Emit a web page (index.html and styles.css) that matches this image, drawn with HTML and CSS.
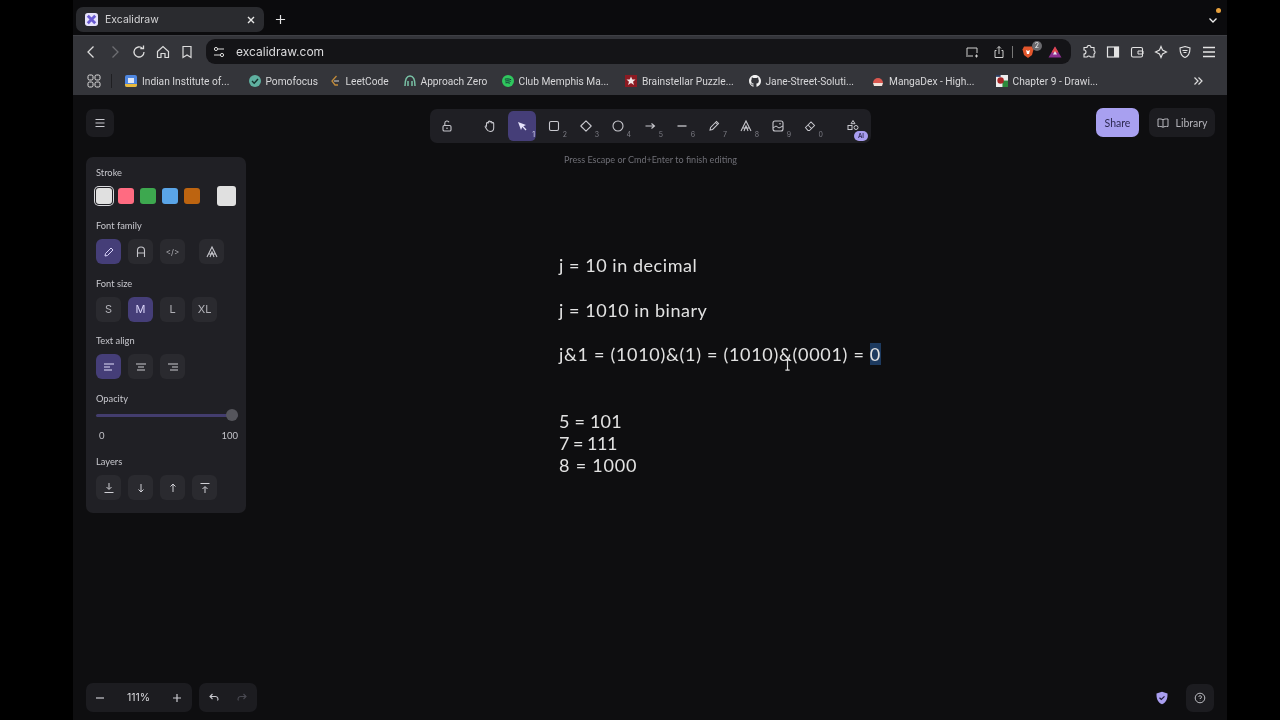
FILE: index.html
```html
<!DOCTYPE html>
<html lang="en">
<head>
<meta charset="utf-8">
<title>Excalidraw</title>
<link rel="stylesheet" href="styles.css">
</head>
<body>
<div class="window">
  <div class="tabstrip">
    <div class="tab">
      <svg class="favicon" viewBox="0 0 14 14"><rect width="14" height="14" rx="3" fill="#e6e2fb"/><path d="M3 3l8 8M11 3l-8 8" stroke="#6a5bd2" stroke-width="3"/></svg>
      <span class="tab-title">Excalidraw</span>
      <svg class="ico10" viewBox="0 0 10 10"><path d="M2 2l6 6M8 2l-6 6" stroke="#e8e8e8" stroke-width="1.4"/></svg>
    </div>
    <svg class="newtab" viewBox="0 0 12 12"><path d="M6 1v10M1 6h10" stroke="#e4e4e4" stroke-width="1.3"/></svg>
    <div class="strip-end">
      <svg class="ico10" viewBox="0 0 10 10"><path d="M1.500 3.500L5 7l3.500-3.500" fill="none" stroke="#eee" stroke-width="1.3"/></svg>
      <span class="rec-dot"></span>
    </div>
  </div>

  <div class="navbar">
    <div class="nav-btns">
      <svg class="ico16" viewBox="0 0 16 16"><path d="M10.500 2.500L5 8l5.500 5.500" fill="none" stroke="#dcdcdc" stroke-width="1.3"/></svg>
      <svg class="ico16" viewBox="0 0 16 16"><path d="M5.500 2.500L11 8l-5.500 5.500" fill="none" stroke="#6d6e72" stroke-width="1.3"/></svg>
      <svg class="ico16" viewBox="0 0 16 16"><path d="M13 8a5 5 0 1 1-1.500-3.600M12.500 1.500v3.200H9.300" fill="none" stroke="#dcdcdc" stroke-width="1.3"/></svg>
      <svg class="ico16" viewBox="0 0 16 16"><path d="M2.500 7.500L8 2.500l5.500 5v6h-3.500v-4h-4v4H2.500z" fill="none" stroke="#dcdcdc" stroke-width="1.200"/></svg>
      <svg class="ico16" viewBox="0 0 16 16"><path d="M4 2.500h8v11L8 11l-4 2.500z" fill="none" stroke="#dcdcdc" stroke-width="1.200"/></svg>
    </div>
    <div class="urlbar">
      <svg class="ico12 url-tune" viewBox="0 0 12 12"><circle cx="3" cy="3" r="1.600" fill="none" stroke="#ddd"/><path d="M5 3h6M1 9h6" stroke="#ddd"/><circle cx="9" cy="9" r="1.600" fill="none" stroke="#ddd"/></svg>
      <span class="url-text">excalidraw.com</span>
      <div class="url-actions">
        <svg class="ico14" viewBox="0 0 14 14"><path d="M2 10V3h10v5M1 11h7M10 11h3M11.500 9.500v3" fill="none" stroke="#d0d0d0"/></svg>
        <svg class="ico14 gap-share" viewBox="0 0 14 14"><path d="M4.500 5.500H3v7h8v-7H9.500M7 9V1.500M5 3.500l2-2 2 2" fill="none" stroke="#d0d0d0"/></svg>
        <span class="url-sep"></span>
        <span class="brave-wrap">
          <svg class="ico14" viewBox="0 0 14 14"><path d="M3 1.500h8l1.500 3L11 10l-4 3-4-3-1.500-5.500z" fill="#e2562c"/><path d="M5 5l2 1 2-1-1 4H6z" fill="#fff"/></svg>
          <span class="brave-badge">2</span>
        </span>
        <svg class="ico14 gap-rewards" viewBox="0 0 14 14"><path d="M7 1.500L13.500 12.500H.5z" fill="#8c2f8f"/><path d="M7 1.500L10.500 7.500H3.500z" fill="#e2474b"/><path d="M7 6l2 3.500H5z" fill="#f0e8f0"/></svg>
      </div>
    </div>
    <div class="ext-btns">
      <svg class="ico14" viewBox="0 0 14 14"><path d="M5 2.500a2 2 0 0 1 4 0H12v3a2 2 0 0 1 0 3.500V12H8.500a2 2 0 0 0-3.500 0H2V9a2 2 0 0 0 0-4V2.500z" fill="none" stroke="#e4e4e4" stroke-width="1.100"/></svg>
      <svg class="ico14" viewBox="0 0 14 14"><rect x="1.500" y="2" width="11" height="10" fill="none" stroke="#e4e4e4" stroke-width="1.200"/><rect x="8" y="2" width="4.500" height="10" fill="#e4e4e4"/></svg>
      <svg class="ico14" viewBox="0 0 14 14"><rect x="1.500" y="2.500" width="11" height="9.500" rx="1.500" fill="none" stroke="#e4e4e4" stroke-width="1.100"/><path d="M8 6h5v3H8z" fill="none" stroke="#e4e4e4"/></svg>
      <svg class="ico14" viewBox="0 0 14 14"><path d="M7 1.500l1.500 3.500 4 2-4 2L7 12.500 5.500 9l-4-2 4-2z" fill="none" stroke="#e4e4e4" stroke-width="1.100"/></svg>
      <svg class="ico14" viewBox="0 0 14 14"><path d="M7 1.500l5 1.500c0 5-1 8-5 9.500-4-1.500-5-4.500-5-9.500z" fill="none" stroke="#e4e4e4" stroke-width="1.100"/><path d="M4.500 5.500h5M5.500 7.500h3" stroke="#e4e4e4"/></svg>
      <svg class="ico14" viewBox="0 0 14 14"><path d="M1 2.500h12M1 7h12M1 11.500h12" stroke="#e4e4e4" stroke-width="1.300"/></svg>
    </div>
  </div>

  <div class="bookmarks">
    <svg class="ico14 apps" viewBox="0 0 14 14"><g fill="none" stroke="#e0e0e0"><rect x="1" y="1" width="5" height="5" rx="1.500"/><rect x="8" y="1" width="5" height="5" rx="1.500"/><rect x="1" y="8" width="5" height="5" rx="1.500"/><rect x="8" y="8" width="5" height="5" rx="1.500"/></g></svg>
    <span class="bm-sep"></span>
    <div class="bm bm-full"><svg class="ico12" viewBox="0 0 12 12"><rect width="12" height="12" rx="2" fill="#4f87e0"/><path d="M0 9h12v1a2 2 0 0 1-2 2H2a2 2 0 0 1-2-2z" fill="#e8b93c"/><rect x="3" y="3" width="6" height="5" fill="#dfe7f5"/></svg><span>Indian Institute of...</span></div>
    <div class="bm bm-pomo"><svg class="ico12" viewBox="0 0 12 12"><circle cx="6" cy="6" r="6" fill="#5fb0a0"/><path d="M3 6l2.200 2.200L9 4" fill="none" stroke="#16302c" stroke-width="1.400"/></svg><span>Pomofocus</span></div>
    <div class="bm bm-leet"><svg class="ico12" viewBox="0 0 12 12"><path d="M7.500 1L3 6l3 4h3" fill="none" stroke="#c08a3a" stroke-width="1.300"/><path d="M5 6h5" stroke="#bbb" stroke-width="1.200"/></svg><span>LeetCode</span></div>
    <div class="bm bm-az"><svg class="ico12" viewBox="0 0 12 12"><path d="M1 11C1 5 3 1 6 1s5 4 5 10M4 11V6M8 11V6" fill="none" stroke="#79c2a6" stroke-width="1.500"/></svg><span>Approach Zero</span></div>
    <div class="bm bm-full"><svg class="ico12" viewBox="0 0 12 12"><circle cx="6" cy="6" r="6" fill="#2fc75d"/><path d="M2.800 4.200c2-.5 4.500-.4 6.400.5M3.200 6c1.800-.4 3.800-.3 5.400.5M3.500 7.800c1.500-.3 3-.2 4.400.4" fill="none" stroke="#123" stroke-width=".9"/></svg><span>Club Memphis Ma...</span></div>
    <div class="bm bm-full"><svg class="ico12" viewBox="0 0 12 12"><rect width="12" height="12" fill="#8b1a22"/><path d="M6 1.500l1.300 3h3.200L8 6.700l1 3.300-3-1.900L3 10l1-3.300-2.500-2.200h3.200z" fill="#f2e6e6"/></svg><span>Brainstellar Puzzle...</span></div>
    <div class="bm bm-full"><svg class="ico12" viewBox="0 0 16 16"><path fill="#f2f2f2" d="M8 0C3.580 0 0 3.580 0 8c0 3.540 2.290 6.530 5.470 7.590.4.070.55-.17.55-.38 0-.19-.01-.82-.01-1.490-2.010.37-2.530-.49-2.690-.94-.09-.23-.48-.94-.82-1.130-.28-.15-.68-.52-.01-.53.63-.01 1.080.58 1.230.82.720 1.210 1.870.87 2.330.66.070-.52.280-.87.510-1.070-1.780-.2-3.640-.89-3.640-3.950 0-.87.310-1.590.820-2.150-.08-.2-.36-1.020.080-2.120 0 0 .67-.21 2.200.82.640-.18 1.320-.27 2-.27s1.360.09 2 .27c1.530-1.040 2.200-.82 2.200-.82.440 1.100.160 1.920.080 2.120.51.560.82 1.270.82 2.150 0 3.070-1.870 3.750-3.650 3.950.290.250.540.730.540 1.480 0 1.070-.010 1.930-.010 2.200 0 .210.150.460.550.380A8.010 8.010 0 0 0 16 8c0-4.420-3.580-8-8-8z"/></svg><span>Jane-Street-Soluti...</span></div>
    <div class="bm bm-full"><svg class="ico12" viewBox="0 0 12 12"><path d="M1 8a5 5 0 0 1 10 0z" fill="#d9574f"/><path d="M1 8h10l-1 3H2z" fill="#f0e2da"/></svg><span>MangaDex - High...</span></div>
    <div class="bm"><svg class="ico12" viewBox="0 0 13 13"><rect width="13" height="13" fill="#eee"/><rect x="7" y="6" width="6" height="7" fill="#2c8a3c"/><circle cx="5" cy="6" r="3.500" fill="#a82626"/><rect y="0" width="5" height="2" fill="#2a3f66"/></svg><span>Chapter 9 - Drawi...</span></div>
    <svg class="ico10 bm-more" viewBox="0 0 10 10"><path d="M1.500 1.500L5 5l-3.500 3.500M5.500 1.500L9 5l-3.500 3.500" fill="none" stroke="#ddd" stroke-width="1.200"/></svg>
  </div>

  <div class="app">
    <header class="topbar">
      <button class="menu-btn"><svg class="ico12" viewBox="0 0 12 12"><path d="M1.500 2.500h9M1.500 6h9M1.500 9.500h9" stroke="#c9c9cf" stroke-width="1.100"/></svg></button>
      <div class="tools-col">
        <div class="tools">
          <span class="tool"><svg class="ico14" viewBox="0 0 14 14"><rect x="3" y="6.500" width="8" height="5.500" rx="1.300" fill="none" stroke="#c5c5cb" stroke-width="1.100"/><path d="M4.800 6.500V4.200a2.200 2.200 0 0 1 4.200-.9" fill="none" stroke="#c5c5cb" stroke-width="1.100"/><circle cx="7" cy="9.200" r=".8" fill="#c5c5cb"/></svg></span>
          <span class="tool-sep"></span>
          <span class="tool"><svg class="ico14" viewBox="0 0 14 14"><path d="M3.500 7V4.500a.9.900 0 0 1 1.800 0V3a.9.900 0 0 1 1.800 0v.5a.9.900 0 0 1 1.800 0V4.500a.9.900 0 0 1 1.800 0V9c0 2.500-1.500 3.500-3.500 3.500S4.500 11.800 3.500 10L2.300 8c-.5-.9.700-1.700 1.200-1z" fill="none" stroke="#c9c9cf" stroke-width="1.050"/></svg></span>
          <span class="tool tool-on"><svg class="ico12" viewBox="0 0 12 12"><path d="M2 2l3 8 1.300-3L9.500 10.500l1-1L7.300 6.200 10 5z" fill="#e6e3fb"/></svg><i>1</i></span>
          <span class="tool"><svg class="ico14" viewBox="0 0 14 14"><rect x="2.500" y="2.500" width="9" height="9" rx="1.500" fill="none" stroke="#c9c9cf" stroke-width="1.100"/></svg><i>2</i></span>
          <span class="tool"><svg class="ico14" viewBox="0 0 14 14"><path d="M7 1.800L12.200 7 7 12.200 1.800 7z" fill="none" stroke="#c9c9cf" stroke-width="1.100" stroke-linejoin="round"/></svg><i>3</i></span>
          <span class="tool"><svg class="ico14" viewBox="0 0 14 14"><circle cx="7" cy="7" r="5" fill="none" stroke="#c9c9cf" stroke-width="1.100"/></svg><i>4</i></span>
          <span class="tool"><svg class="ico14" viewBox="0 0 14 14"><path d="M2.500 7h9M8.500 4.500L11.500 7l-3 2.500" fill="none" stroke="#c9c9cf" stroke-width="1.100"/></svg><i>5</i></span>
          <span class="tool"><svg class="ico14" viewBox="0 0 14 14"><path d="M2.500 7h9" stroke="#c9c9cf" stroke-width="1.300"/></svg><i>6</i></span>
          <span class="tool"><svg class="ico14" viewBox="0 0 14 14"><path d="M3 11l.6-2.600L9.500 2.500l2 2-5.900 5.900zM8.500 3.500l2 2" fill="none" stroke="#c9c9cf" stroke-width="1.050"/></svg><i>7</i></span>
          <span class="tool"><svg class="ico14" viewBox="0 0 14 14"><path d="M2 12L7 2l5 10M4 9h6M5 12L7 7l2 5" fill="none" stroke="#c9c9cf" stroke-width="1.050"/></svg><i>8</i></span>
          <span class="tool"><svg class="ico14" viewBox="0 0 14 14"><rect x="2" y="2" width="10" height="10" rx="2" fill="none" stroke="#c9c9cf" stroke-width="1.100"/><path d="M2 9l3-2 3 2 4-2" fill="none" stroke="#c9c9cf"/><circle cx="9" cy="4.800" r=".8" fill="#c9c9cf"/></svg><i>9</i></span>
          <span class="tool"><svg class="ico14" viewBox="0 0 14 14"><path d="M2.500 8.500L8 3l3.500 3.500L6.500 11.500H5zM5 6l3.500 3.500" fill="none" stroke="#c9c9cf" stroke-width="1.050"/></svg><i>0</i></span>
          <span class="tool-sep"></span>
          <span class="tool"><svg class="ico14" viewBox="0 0 14 14"><path d="M7 1.500l2 3.200H5z" fill="none" stroke="#c9c9cf"/><rect x="2" y="6.500" width="4" height="4" fill="none" stroke="#c9c9cf"/><circle cx="10" cy="8.500" r="2" fill="none" stroke="#c9c9cf"/></svg><b class="ai-badge">AI</b></span>
        </div>
        <div class="hint">Press Escape or Cmd+Enter to finish editing</div>
      </div>
      <div class="top-right">
        <button class="share">Share</button>
        <button class="library"><svg class="ico12" viewBox="0 0 12 12"><path d="M6 2.800C5 2 3 1.800 1 2v7.500c2-.2 4 0 5 .8 1-.8 3-1 5-.8V2c-2-.2-4 0-5 .8zM6 2.800v7.500" fill="none" stroke="#b8b8be"/></svg>Library</button>
      </div>
    </header>

    <div class="stage">
      <aside class="panel">
        <h4>Stroke</h4>
        <div class="swatches">
          <span class="swatch swatch-on sw-white"></span>
          <span class="swatch sw-red"></span>
          <span class="swatch sw-green"></span>
          <span class="swatch sw-blue"></span>
          <span class="swatch sw-orange"></span>
          <span class="swatch-big"></span>
        </div>
        <h4>Font family</h4>
        <div class="btns">
          <span class="pbtn pbtn-on"><svg class="ico12" viewBox="0 0 12 12"><path d="M2 10l.5-2.500L8 2l2 2-5.500 5.500z" fill="none" stroke="#d8d3f8"/></svg></span>
          <span class="pbtn"><svg class="ico12" viewBox="0 0 12 12"><path d="M2.500 11V4.500a3.500 3.500 0 0 1 7 0V11M2.500 7h7" fill="none" stroke="#c4c4ca" stroke-width="1.100"/></svg></span>
          <span class="pbtn code">&lt;/&gt;</span>
          <span class="pbtn pbtn-far"><svg class="ico14" viewBox="0 0 14 14"><path d="M2 12L7 2l5 10M4 9h6M5 12L7 7l2 5" fill="none" stroke="#c9c9cf" stroke-width="1.050"/></svg></span>
        </div>
        <h4>Font size</h4>
        <div class="btns">
          <span class="pbtn">S</span>
          <span class="pbtn pbtn-on">M</span>
          <span class="pbtn">L</span>
          <span class="pbtn">XL</span>
        </div>
        <h4>Text align</h4>
        <div class="btns">
          <span class="pbtn pbtn-on"><svg class="ico10" viewBox="0 0 10 10"><path d="M0 2h10M0 5h6M0 8h8" stroke="#e2def9" stroke-width="1.100"/></svg></span>
          <span class="pbtn"><svg class="ico10" viewBox="0 0 10 10"><path d="M0 2h10M2 5h6M1 8h8" stroke="#c9c9cf" stroke-width="1.100"/></svg></span>
          <span class="pbtn"><svg class="ico10" viewBox="0 0 10 10"><path d="M0 2h10M4 5h6M2 8h8" stroke="#c9c9cf" stroke-width="1.100"/></svg></span>
        </div>
        <h4>Opacity</h4>
        <div class="slider"><span class="thumb"></span></div>
        <div class="range"><span>0</span><span>100</span></div>
        <h4>Layers</h4>
        <div class="btns">
          <span class="pbtn"><svg class="ico12" viewBox="0 0 12 12"><path d="M6 1v6M3.500 5L6 7.500 8.500 5M1.500 10.500h9" fill="none" stroke="#d0d0d6"/></svg></span>
          <span class="pbtn"><svg class="ico12" viewBox="0 0 12 12"><path d="M6 2v8M3.500 7.500L6 10l2.500-2.500" fill="none" stroke="#d0d0d6"/></svg></span>
          <span class="pbtn"><svg class="ico12" viewBox="0 0 12 12"><path d="M6 10V2M3.500 4.500L6 2l2.500 2.500" fill="none" stroke="#d0d0d6"/></svg></span>
          <span class="pbtn"><svg class="ico12" viewBox="0 0 12 12"><path d="M1.500 1.500h9M6 11V5M3.500 7L6 4.500 8.500 7" fill="none" stroke="#d0d0d6"/></svg></span>
        </div>
      </aside>
      <main class="canvas">
        <p class="ln ln1">j = 10 in decimal</p>
        <p class="ln ln2">j = 1010 in binary</p>
        <p class="ln ln3">j&amp;1 = (1010)&amp;(1) = (1010)&amp;(0001) = <span class="sel">0</span><svg class="ibeam" viewBox="0 0 8 14"><path d="M1.500 1h5M4 1v12M1.500 13h5" stroke="#ddd" stroke-width="1.400" fill="none"/></svg></p>
        <div class="group">
          <p class="ln ln5">5 = 101</p>
          <p class="ln ln7">7 = 111</p>
          <p class="ln ln8">8 = 1000</p>
        </div>
      </main>
    </div>

    <footer class="bottombar">
      <div class="pill zoom"><svg class="ico10" viewBox="0 0 10 10"><path d="M1 5h8" stroke="#c9c9cf" stroke-width="1.200"/></svg><span>111%</span><svg class="ico10" viewBox="0 0 10 10"><path d="M1 5h8M5 1v8" stroke="#c9c9cf" stroke-width="1.200"/></svg></div>
      <div class="pill undo"><svg class="ico12" viewBox="0 0 12 12"><path d="M4.500 2L2 4.500 4.500 7M2 4.500h5.500a2.500 2.500 0 0 1 2 4" fill="none" stroke="#c9c9cf" stroke-width="1.100"/></svg><svg class="ico12" viewBox="0 0 12 12"><path d="M7.500 2L10 4.500 7.500 7M10 4.500H4.500a2.500 2.500 0 0 0-2 4" fill="none" stroke="#4a4a52" stroke-width="1.100"/></svg></div>
      <div class="bottom-right">
        <svg class="ico14" viewBox="0 0 14 14"><path d="M7 .8l5.500 1.700c.2 5-1 8.800-5.500 10.700C2.500 11.300 1.300 7.500 1.500 2.500z" fill="#a99ef0"/><path d="M4.500 6.800L6.300 8.500 9.500 5.300" fill="none" stroke="#1e1a38" stroke-width="1.200"/></svg>
        <button class="help"><svg class="ico12" viewBox="0 0 12 12"><circle cx="6" cy="6" r="4.800" fill="none" stroke="#bdbdc3"/><path d="M4.700 4.800A1.400 1.400 0 1 1 6 6.500V7M6 8.500v.3" fill="none" stroke="#bdbdc3"/></svg></button>
      </div>
    </footer>
  </div>
</div>
</body>
</html>
```
FILE: styles.css
```css
* { box-sizing: border-box; }
html, body { margin: 0; height: 100%; background: #000; overflow: hidden; }
body { font-family: "Inter", "Liberation Sans", sans-serif; }
svg { display: block; flex: none; }
.ico10 { width: 10px; height: 10px; }
.ico12 { width: 12px; height: 12px; }
.ico14 { width: 14px; height: 14px; }
.ico16 { width: 16px; height: 16px; }

.window { width: 1154px; height: 720px; margin-left: 73px; background: #0e0e10; display: flex; flex-direction: column; filter: blur(.35px); }

.tabstrip { height: 35px; flex: none; background: #0b0b0d; display: flex; align-items: center; padding: 4px 0 0 3px; }
.tab { width: 188px; height: 25px; background: #2a2b2f; border-radius: 7px; display: flex; align-items: center; padding: 0 8px 0 9px; gap: 7px; }
.favicon { width: 13px; height: 13px; flex: none; }
.tab-title { flex: 1; color: #d4d4d6; font-size: 10.5px; }
.newtab { width: 11px; height: 11px; margin-left: 11px; }
.strip-end { margin-left: auto; margin-right: 9px; position: relative; }
.rec-dot { position: absolute; width: 5px; height: 5px; border-radius: 50%; background: #e8a13c; top: -7px; right: -3px; }

.navbar { height: 32px; flex: none; background: #34353a; display: flex; align-items: center; padding-left: 10px; border-top: 1px solid #3f4045; }
.nav-btns { display: flex; gap: 8px; width: 123px; }
.urlbar { width: 865px; height: 25px; background: #141417; border-radius: 9px; display: flex; align-items: center; padding: 0 9px 0 7px; }
.url-text { color: #dcdcde; font-size: 12px; margin-left: 11px; }
.url-actions { margin-left: auto; display: flex; align-items: center; }
.gap-share { margin-left: 13px; }
.url-sep { width: 1px; height: 12px; background: #777; margin: 0 8px 0 6px; }
.brave-wrap { position: relative; }
.brave-badge { position: absolute; top: -4px; right: -7px; width: 10px; height: 10px; border-radius: 50%; background: #6a6a6e; color: #eee; font-size: 7px; line-height: 10px; text-align: center; }
.gap-rewards { margin-left: 13px; }
.ext-btns { display: flex; gap: 10px; margin-left: 11px; }

.bookmarks { height: 28px; flex: none; background: #34353a; display: flex; align-items: center; padding-left: 14px; }
.bm-sep { width: 1px; height: 14px; background: #1f1f22; margin: 0 13px 0 10px; }
.bm { display: flex; align-items: center; gap: 5px; color: #d7d7d9; font-family: "Roboto", sans-serif; font-size: 10.2px; white-space: nowrap; flex: none; }
.bm-full { width: 123.5px; }
.bm-pomo { width: 80px; }
.bm-leet { width: 75px; }
.bm-az { width: 98px; }
.bm-more { margin-left: auto; margin-right: 24px; }

.app { flex: 1; display: flex; flex-direction: column; padding: 13px 12px 8px 13px; background: #0e0e10; min-height: 0; }
.topbar { display: flex; align-items: flex-start; height: 49px; flex: none; }
.menu-btn { width: 28px; height: 28px; margin-top: 1px; border: 0; padding: 0; background: #1c1c20; border-radius: 7px; display: flex; align-items: center; justify-content: center; }
.tools-col { margin-left: 316px; width: 441px; display: flex; flex-direction: column; align-items: center; }
.tools { width: 441px; height: 34px; background: #1f1f24; border-radius: 7px; display: flex; align-items: center; padding-left: 1px; margin-top: 1px; }
.tool { position: relative; width: 32px; height: 32px; flex: none; display: flex; align-items: center; justify-content: center; border-radius: 7px; }
.tool i { position: absolute; right: 3px; bottom: 3px; font-style: normal; font-size: 7px; color: #7e7e86; }
.tool-on { background: #453e78; background-clip: padding-box; border: solid transparent; border-width: 1px 2px; }
.tool-on i { color: #d9d6f2; right: 1px; bottom: 2px; }
.tool-sep { width: 11px; flex: none; }
.ai-badge { position: absolute; right: 1px; bottom: 1px; width: 14px; height: 10px; border-radius: 5px; background: #a99ef0; color: #29244c; font-size: 6px; line-height: 10px; text-align: center; font-weight: 600; }
.hint { color: #6f6f76; font-family: "Lato", sans-serif; font-size: 9.050px; margin-top: 11px; white-space: nowrap; }
.top-right { margin-left: auto; display: flex; gap: 10px; }
.share { width: 43px; height: 29px; border: 0; padding: 0; border-radius: 7px; background: #a8a0f0; color: #2c2850; font: 10.5px "Lato", sans-serif; }
.library { width: 66px; height: 29px; border: 0; padding: 0; border-radius: 7px; background: #1c1c20; color: #b4b4ba; font: 10.5px "Lato", sans-serif; display: flex; align-items: center; justify-content: center; gap: 7px; }

.stage { flex: 1; display: flex; min-height: 0; }
.panel { width: 160px; height: 356px; background: #202025; border-radius: 7px; padding: 10px; flex: none; }
.panel h4 { margin: 0 0 8px; font-family: "Lato", sans-serif; font-size: 9.300px; line-height: 11px; font-weight: 400; color: #c8c8ce; }
.swatches { display: flex; gap: 6px; align-items: center; height: 20px; margin-bottom: 14px; }
.swatch { width: 16px; height: 16px; border-radius: 3px; flex: none; }
.swatch-on { box-shadow: 0 0 0 1px #202025, 0 0 0 2px #d9d9dd; }
.sw-white { background: #e0e0e0; }
.sw-red { background: #ff6b81; }
.sw-green { background: #3da84f; }
.sw-blue { background: #5aa5e8; }
.sw-orange { background: #bd6410; margin-left: -.5px; }
.swatch-big { width: 20px; height: 20px; background: #e0e0e0; border-radius: 3px; margin-left: 11px; }
.btns { display: flex; gap: 7px; margin-bottom: 13.500px; }
.pbtn { width: 25px; height: 25px; background: #2a2a2f; border-radius: 6px; display: flex; align-items: center; justify-content: center; color: #b0b0b6; font-size: 11px; flex: none; }
.pbtn-on { background: #453e78; color: #d8d3f8; }
.pbtn-far { margin-left: 7px; }
.code { font-size: 8px; }
.slider { position: relative; height: 3px; background: #433d6e; border-radius: 2px; margin: 10px 0 13.500px; width: 142px; }
.thumb { position: absolute; right: 0; top: -4.500px; width: 12px; height: 12px; border-radius: 50%; background: #55555c; }
.range { display: flex; justify-content: space-between; color: #c4c4ca; font-family: "Lato", sans-serif; font-size: 9.500px; line-height: 12px; padding: 0 0 0 3px; width: 142px; margin-bottom: 14px; }

.canvas { flex: 1; padding: 0 0 0 313px; min-width: 0; }
.ln { margin: 0; color: #e2e2e2; font-family: "Lato", sans-serif; font-weight: 400; font-size: 18px; line-height: 22px; white-space: nowrap; position: relative; }
.ln1 { margin-top: 97px; letter-spacing: .55px; }
.ln2 { margin-top: 23px; letter-spacing: .55px; }
.ln3 { margin-top: 22px; letter-spacing: .7px; }
.group { margin-top: 45px; }
.ln5 { letter-spacing: .2px; }
.ln7 { letter-spacing: -.5px; }
.ln8 { letter-spacing: .8px; }
.sel { background: #1d3a5f; display: inline-block; }
.ibeam { position: absolute; width: 7px; height: 12px; left: 225px; top: 16px; }

.bottombar { display: flex; align-items: center; height: 29px; flex: none; gap: 7px; }
.pill { height: 29px; background: #1c1c20; border-radius: 7px; display: flex; align-items: center; }
.zoom { width: 106px; justify-content: space-between; padding: 0 10px 0 9px; color: #d6d6da; font-size: 10.500px; }
.undo { width: 58px; justify-content: space-between; padding: 0 9px; }
.bottom-right { margin-left: auto; display: flex; align-items: center; gap: 17px; margin-right: 1px; }
.help { width: 28px; height: 28px; border: 0; padding: 0; border-radius: 7px; background: #1c1c20; display: flex; align-items: center; justify-content: center; }
```
